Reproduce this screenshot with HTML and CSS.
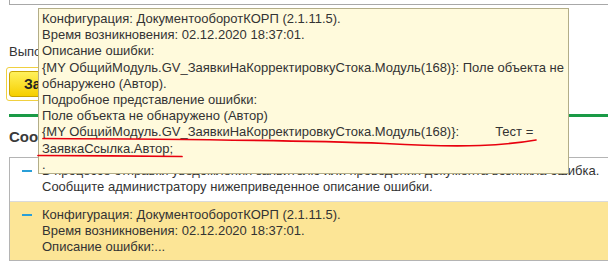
FILE: index.html
```html
<!DOCTYPE html>
<html lang="ru">
<head>
  <meta charset="UTF-8">
  <title>Отправка уведомления</title>
  <link rel="stylesheet" href="styles.css">
</head>
<body>

<div class="form">
  <div class="field"></div>
  <div class="status">Выполнение отправки</div>
  <div class="btn-wrap">
    <button class="btn">Закрыть</button>
  </div>
  <div class="rule"></div>
  <div class="section-title">Сообщения:</div>

  <div class="messages">
    <div class="msg">
      <span class="dash"></span>
      <div class="msg-text">В процессе отправки уведомления заявителю или проведения документа возникла ошибка.<br>Сообщите администратору нижеприведенное описание ошибки.</div>
    </div>
    <div class="msg msg-selected">
      <span class="dash"></span>
      <div class="msg-text">Конфигурация: ДокументооборотКОРП (2.1.11.5).<br>Время возникновения: 02.12.2020 18:37:01.<br>Описание ошибки:...</div>
    </div>
  </div>
</div>

<div class="tooltip">
  Конфигурация: ДокументооборотКОРП (2.1.11.5).<br>
  Время возникновения: 02.12.2020 18:37:01.<br>
  Описание ошибки:<br>
  {MY ОбщийМодуль.GV_ЗаявкиНаКорректировкуСтока.Модуль(168)}: Поле объекта не<br>
  обнаружено (Автор).<br>
  Подробное представление ошибки:<br>
  Поле объекта не обнаружено (Автор)<br>
  {MY ОбщийМодуль.GV_ЗаявкиНаКорректировкуСтока.Модуль(168)}:<span class="tab">Тест =</span><br>
  ЗаявкаСсылка.Автор;<br>
  .
</div>

<svg class="marks" width="608" height="271" viewBox="0 0 608 271">
  <path d="M43 138.5 C 150 139, 300 140.5, 385 143.5 C 420 145.5, 450 146.5, 480 145.5 C 505 144.5, 525 142, 536 140" />
  <path d="M38 155.5 C 80 155.5, 140 156, 182 156.5" />
</svg>

</body>
</html>
```

FILE: styles.css
```css
body {
  margin: 0;
  font-family: "Liberation Sans", Arial, sans-serif;
  font-size: 13px;
  color: #333;
  background-color: #fff;
  overflow: hidden;
  position: relative;
  width: 608px;
  height: 271px;
}

.form {
  padding-left: 9px;
}

.field {
  height: 4px;
  border-left: 1px solid #a8a8a8;
  border-bottom: 1px solid #a8a8a8;
}

.status {
  margin-top: 39px;
  line-height: 16px;
  white-space: nowrap;
}

.btn-wrap {
  display: inline-block;
  margin-top: 7px;
  margin-left: -3px;
  padding: 3px 2px;
  border: 1px solid #f0d040;
  border-radius: 3px;
}

.btn {
  display: block;
  height: 26px;
  padding: 0 14px;
  font-family: inherit;
  font-size: 14px;
  font-weight: bold;
  color: #222;
  border: 1px solid #c9a400;
  border-radius: 3px;
  background: linear-gradient(#fff15c, #f6cf00);
}

.rule {
  margin-top: 13px;
  height: 3px;
  background-color: #1a9a46;
}

.section-title {
  margin-top: 11px;
  font-size: 15px;
  font-weight: bold;
  line-height: 18px;
  color: #3a3a3a;
}

.messages {
  margin-top: 11px;
  border: 1px solid #b4b4b4;
  border-right: none;
}

.msg {
  display: flex;
  padding: 5px 0;
  line-height: 16px;
}

.msg + .msg {
  border-top: 1px solid #dadada;
  margin-top: 1px;
}

.msg-selected {
  background-color: #fce596;
}

.dash {
  width: 10px;
  height: 2px;
  margin: 7px 10px 0 12px;
  background-color: #2a9fd8;
  flex-shrink: 0;
}

.msg-text {
  white-space: nowrap;
}

.tooltip {
  position: absolute;
  left: 38px;
  top: 8px;
  width: 531px;
  height: 166px;
  box-sizing: border-box;
  padding: 2px 3px 0 3px;
  line-height: 16.2px;
  color: #333;
  white-space: nowrap;
  background-color: #fffadc;
  border: 1px solid #b3ad88;
}

.tab {
  padding-left: 36px;
}

.marks {
  position: absolute;
  left: 0;
  top: 0;
  pointer-events: none;
}

.marks path {
  fill: none;
  stroke: #e8000e;
  stroke-width: 1.7;
  stroke-linecap: round;
}
```
